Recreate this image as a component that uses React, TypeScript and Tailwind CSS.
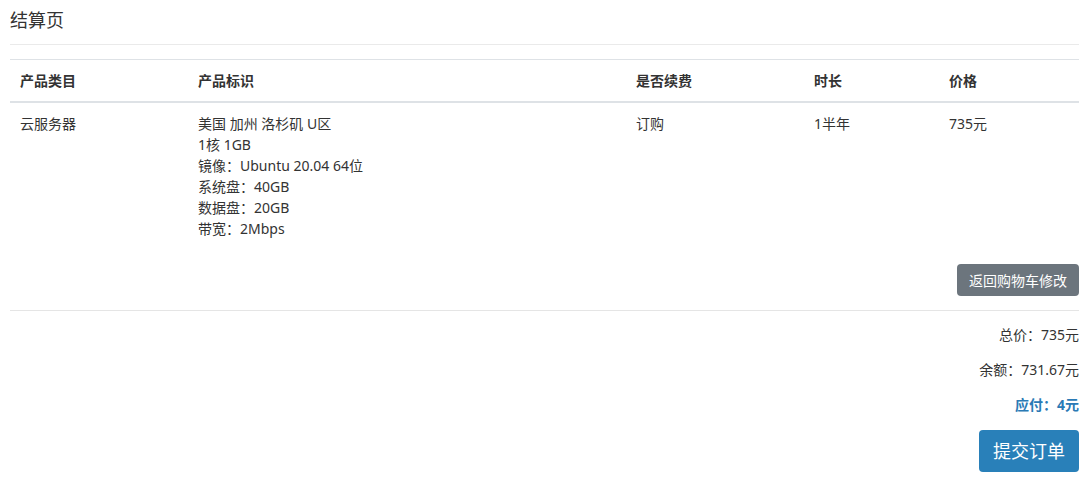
import React from "react"

const font = { fontFamily: '"Segoe UI", "Noto Sans", "Noto Sans CJK SC", sans-serif' }

const specs = [
    "美国 加州 洛杉矶 U区",
    "1核 1GB",
    "镜像：Ubuntu 20.04 64位",
    "系统盘：40GB",
    "数据盘：20GB",
    "带宽：2Mbps",
]

const App = () => {
    return (
        <div className="bg-white min-h-screen text-[14px] leading-[21px] text-[#333]" style={font}>
            <div className="pl-[10px] pr-[8px]">
                <h1 className="text-[18px] leading-[26px] pt-[7px] pb-[11px] border-b border-[#eaeaea]">结算页</h1>
                <table className="w-full mt-[14px] border-collapse">
                    <thead>
                        <tr className="border-t border-[#dee2e6] border-b-2">
                            <th className="w-[178px] text-left font-bold p-[10px]">产品类目</th>
                            <th className="w-[438px] text-left font-bold p-[10px]">产品标识</th>
                            <th className="w-[178px] text-left font-bold p-[10px]">是否续费</th>
                            <th className="w-[135px] text-left font-bold p-[10px]">时长</th>
                            <th className="text-left font-bold p-[10px]">价格</th>
                        </tr>
                    </thead>
                    <tbody>
                        <tr className="align-top">
                            <td className="p-[10px]">云服务器</td>
                            <td className="p-[10px]">
                                {specs.map((s) => (
                                    <div key={s}>{s}</div>
                                ))}
                            </td>
                            <td className="p-[10px]">订购</td>
                            <td className="p-[10px]">1半年</td>
                            <td className="p-[10px]">735元</td>
                        </tr>
                    </tbody>
                </table>
                <div className="flex justify-end mt-[15px]">
                    <button className="bg-[#6c757d] text-white rounded-[4px] px-[12px] h-[32px] text-[14px]">返回购物车修改</button>
                </div>
                <div className="border-t border-[#e5e5e5] mt-[14px]" />
                <div className="flex flex-col items-end">
                    <p className="mt-[13px]">总价：735元</p>
                    <p className="mt-[14px]">余额：731.67元</p>
                    <p className="mt-[14px] font-bold text-[#2a7ab5]">应付：4元</p>
                    <button className="mt-[15px] bg-[#2980b9] text-white rounded-[4px] px-[14px] h-[42px] text-[18px]">提交订单</button>
                </div>
            </div>
        </div>
    )
}

export default App
